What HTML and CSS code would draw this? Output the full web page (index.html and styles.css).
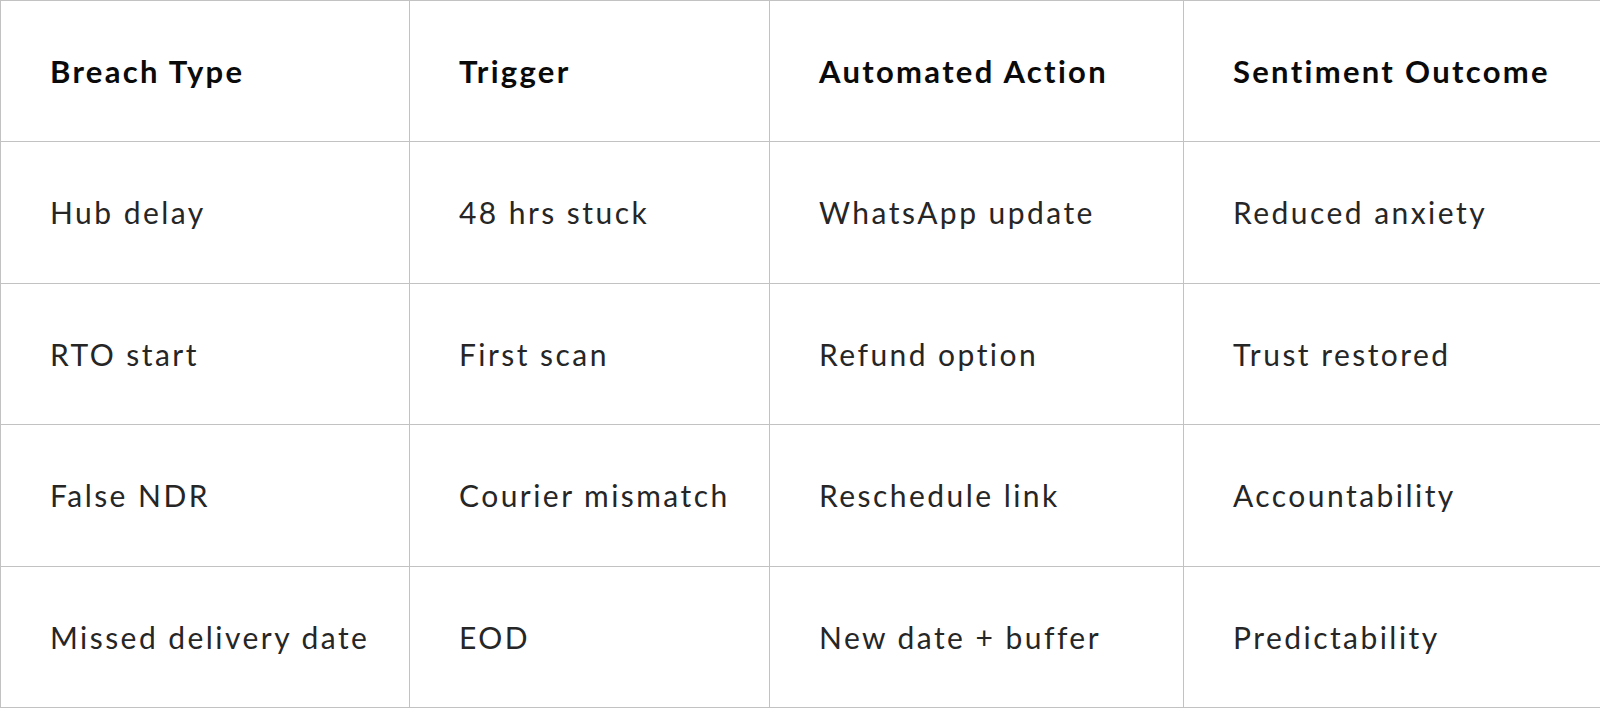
FILE: index.html
```html
<!DOCTYPE html>
<html lang="en">
<head>
<meta charset="utf-8">
<title>Breach table</title>
<link rel="stylesheet" href="styles.css">
</head>
<body>
<table class="breach-table">
  <colgroup>
    <col class="c1"><col class="c2"><col class="c3"><col class="c4">
  </colgroup>
  <thead>
    <tr>
      <th>Breach Type</th>
      <th>Trigger</th>
      <th>Automated Action</th>
      <th>Sentiment Outcome</th>
    </tr>
  </thead>
  <tbody>
    <tr><td>Hub delay</td><td>48 hrs stuck</td><td>WhatsApp update</td><td>Reduced anxiety</td></tr>
    <tr><td>RTO start</td><td>First scan</td><td>Refund option</td><td>Trust restored</td></tr>
    <tr><td>False NDR</td><td>Courier mismatch</td><td>Reschedule link</td><td>Accountability</td></tr>
    <tr><td>Missed delivery date</td><td>EOD</td><td>New date + buffer</td><td>Predictability</td></tr>
  </tbody>
</table>
</body>
</html>
```

FILE: styles.css
```css
html, body {
  margin: 0;
  padding: 0;
  background: #ffffff;
}
.breach-table {
  width: 1600px;
  height: 708px;
  border-collapse: collapse;
  table-layout: fixed;
  font-family: Lato, "Liberation Sans", sans-serif;
}
.c1 { width: 409px; }
.c2 { width: 360px; }
.c3 { width: 414px; }
.c4 { width: 417px; }
.breach-table th,
.breach-table td {
  border: 1px solid #c2c2c2;
  padding: 0 0 0 49px;
  text-align: left;
  vertical-align: middle;
  height: 140px;
  white-space: nowrap;
}
.breach-table th {
  font-size: 31px;
  font-weight: 700;
  color: #0a0a0a;
  letter-spacing: 2.3px;
}
.breach-table td {
  font-size: 30px;
  font-weight: 400;
  color: #262626;
  letter-spacing: 2.45px;
}
```
